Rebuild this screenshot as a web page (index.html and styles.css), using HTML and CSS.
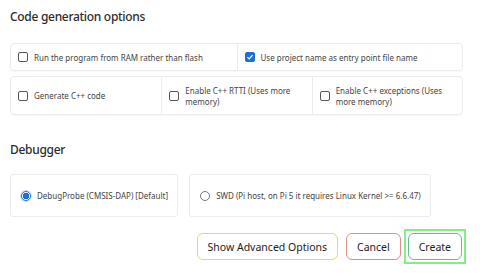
FILE: index.html
```html
<!DOCTYPE html>
<html lang="en">
<head>
    <meta charset="UTF-8">
    <meta name="viewport" content="width=device-width, initial-scale=1.0">
    <title>New Project</title>
    <link rel="stylesheet" href="styles.css">
</head>
<body>
    <div class="page">
        <h2 class="section-title">Code generation options</h2>

        <div class="option-card cols-2">
            <label class="option">
                <span class="check"></span>
                <span>Run the program from RAM rather than flash</span>
            </label>
            <label class="option">
                <span class="check checked">
                    <svg viewBox="0 0 10 10" width="8" height="8"><path d="M1.8 5.2 L4 7.3 L8.2 2.6" fill="none" stroke="#fff" stroke-width="1.6"/></svg>
                </span>
                <span>Use project name as entry point file name</span>
            </label>
        </div>

        <div class="option-card cols-3">
            <label class="option">
                <span class="check"></span>
                <span>Generate C++ code</span>
            </label>
            <label class="option">
                <span class="check"></span>
                <span>Enable C++ RTTI (Uses more memory)</span>
            </label>
            <label class="option">
                <span class="check"></span>
                <span>Enable C++ exceptions (Uses more memory)</span>
            </label>
        </div>

        <h2 class="section-title debugger-title">Debugger</h2>

        <div class="debugger-row">
            <label class="radio-card">
                <span class="radio selected"></span>
                <span>DebugProbe (CMSIS-DAP) [Default]</span>
            </label>
            <label class="radio-card">
                <span class="radio"></span>
                <span>SWD (Pi host, on Pi 5 it requires Linux Kernel &gt;= 6.6.47)</span>
            </label>
        </div>

        <div class="actions">
            <button class="btn btn-advanced">Show Advanced Options</button>
            <button class="btn btn-cancel">Cancel</button>
            <span class="focus-ring"><button class="btn btn-create">Create</button></span>
        </div>
    </div>
</body>
</html>
```

FILE: styles.css
```css
body {
    margin: 0;
    background: #fff;
    color: #333;
    font-family: 'Noto Sans', 'Open Sans', sans-serif;
}
.page {
    padding: 7px 10px 0 10px;
    width: 453px;
}
.section-title {
    margin: 0;
    font-size: 12px;
    font-weight: 500;
    letter-spacing: -0.3px;
    line-height: 20px;
    color: #2b2b2b;
}
.option-card {
    display: grid;
    border: 1px solid #ececec;
    border-radius: 4px;
    margin-top: 5px;
    box-shadow: 0 1px 1px rgba(0, 0, 0, 0.03);
}
.section-title + .option-card {
    margin-top: 16px;
}
.cols-2 {
    grid-template-columns: 1fr 1fr;
    height: 26px;
}
.cols-3 {
    grid-template-columns: 1fr 1fr 1fr;
    height: 37px;
}
.option {
    display: flex;
    align-items: center;
    gap: 6px;
    padding: 0 8px 0 7px;
    font-size: 8px;
    line-height: 11px;
    color: #444;
    border-left: 1px solid #ececec;
}
.option:first-child {
    border-left: none;
}
.check {
    flex: none;
    width: 8px;
    height: 8px;
    border: 1px solid #555;
    border-radius: 2px;
    display: flex;
    align-items: center;
    justify-content: center;
}
.check.checked {
    background: #1a6fd8;
    border-color: #1a6fd8;
}
.debugger-title {
    margin-top: 25px;
}
.debugger-row {
    display: flex;
    gap: 11px;
    margin-top: 14px;
}
.radio-card {
    display: flex;
    align-items: center;
    gap: 6px;
    height: 41px;
    padding: 0 9px 0 10px;
    border: 1px solid #ececec;
    border-radius: 3px;
    font-size: 8px;
    color: #444;
}
.radio {
    flex: none;
    width: 8px;
    height: 8px;
    border: 1px solid #777;
    border-radius: 50%;
}
.radio.selected {
    border-color: #1a6fd8;
    background: radial-gradient(circle, #1a6fd8 0 3px, #fff 3.5px);
    box-shadow: 0 0 0 1px rgba(26, 111, 216, 0.25);
}
.actions {
    display: flex;
    justify-content: flex-end;
    align-items: center;
    gap: 8px;
    margin-top: 12px;
    margin-right: -3px;
}
.btn {
    height: 27px;
    padding: 0 10px;
    background: #fff;
    border: 1px solid #ccc;
    border-radius: 6px;
    font-family: 'Noto Sans', 'Open Sans', sans-serif;
    font-size: 10.5px;
    color: #222;
    cursor: pointer;
}
.btn-advanced {
    border-color: #ecd76a;
}
.btn-cancel {
    border-color: #dc8f8f;
}
.btn-create {
    border-color: #5fbf8f;
    padding: 0 10px;
}
.focus-ring {
    display: inline-flex;
    padding: 2px;
    border: 2px solid #86ec86;
    margin-left: -5px;
}
```
